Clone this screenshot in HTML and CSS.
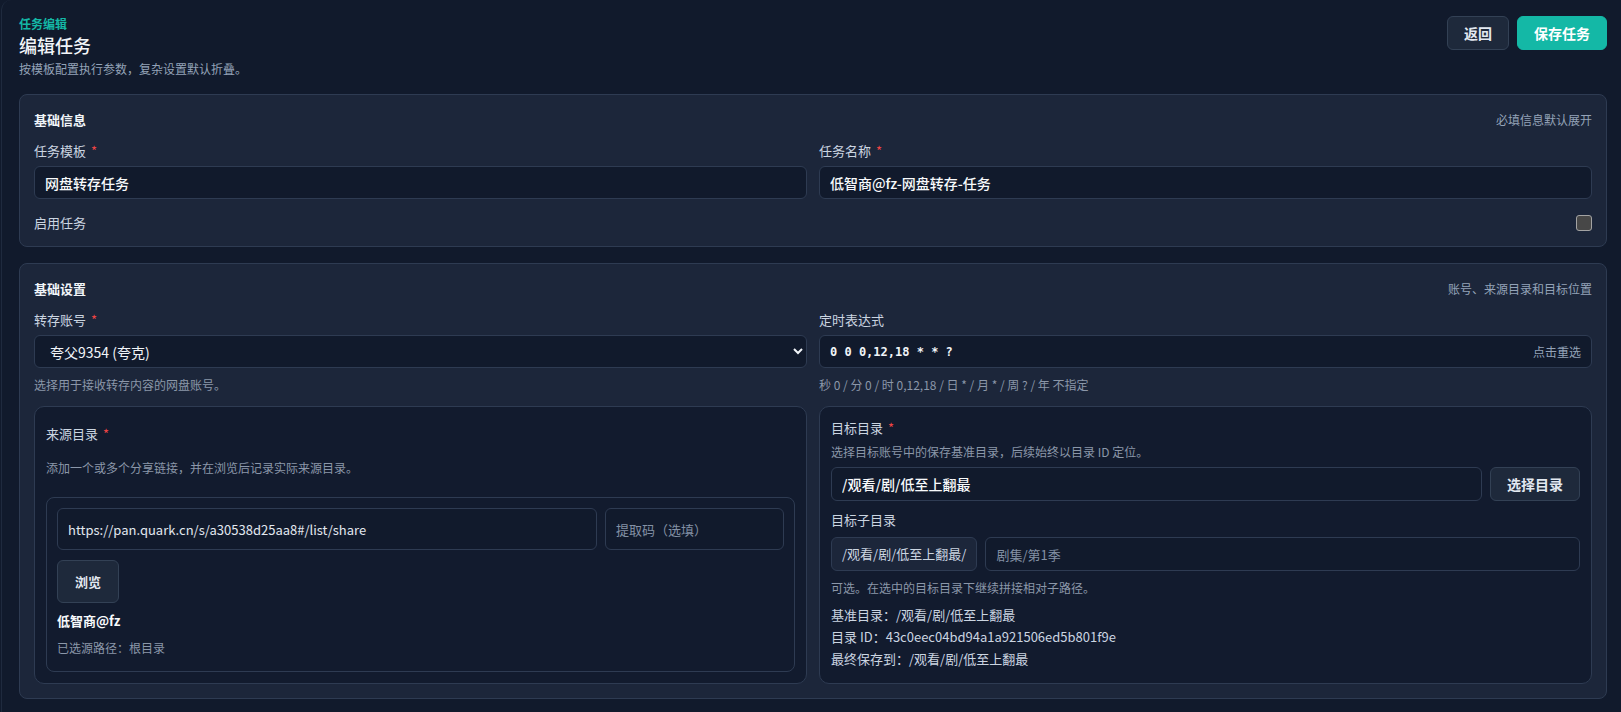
FILE: index.html
```html
<!DOCTYPE html>
<html lang="zh-CN">
<head>
  <meta charset="UTF-8">
  <title>编辑任务</title>
  <link rel="stylesheet" href="styles.css">
</head>
<body>
  <div class="page">
    <header class="page-head">
      <div>
        <div class="eyebrow">任务编辑</div>
        <h1>编辑任务</h1>
        <p class="sub">按模板配置执行参数，复杂设置默认折叠。</p>
      </div>
      <div class="actions">
        <button class="btn">返回</button>
        <button class="btn primary">保存任务</button>
      </div>
    </header>

    <section class="card">
      <div class="card-head">
        <h2>基础信息</h2>
        <span class="hint">必填信息默认展开</span>
      </div>
      <div class="grid">
        <div class="field">
          <span class="label">任务模板 <i class="req">*</i></span>
          <input class="input strong" type="text" value="网盘转存任务">
        </div>
        <div class="field">
          <span class="label">任务名称 <i class="req">*</i></span>
          <input class="input strong" type="text" value="低智商@fz-网盘转存-任务">
        </div>
      </div>
      <div class="toggle-row">
        <span class="label">启用任务</span>
        <input class="check" type="checkbox">
      </div>
    </section>

    <section class="card">
      <div class="card-head">
        <h2>基础设置</h2>
        <span class="hint">账号、来源目录和目标位置</span>
      </div>
      <div class="grid">
        <div class="field">
          <span class="label">转存账号 <i class="req">*</i></span>
          <select class="input select">
            <option>夸父9354 (夸克)</option>
          </select>
          <p class="help">选择用于接收转存内容的网盘账号。</p>
        </div>
        <div class="field">
          <span class="label">定时表达式</span>
          <div class="input cron">
            <code>0 0 0,12,18 * * ?</code>
            <span class="cron-pick">点击重选</span>
          </div>
          <p class="help">秒 0 / 分 0 / 时 0,12,18 / 日 * / 月 * / 周 ? / 年 不指定</p>
        </div>
      </div>

      <div class="grid boxes">
        <div class="box source">
          <span class="label">来源目录 <i class="req">*</i></span>
          <p class="help source-help">添加一个或多个分享链接，并在浏览后记录实际来源目录。</p>
          <div class="link-item">
            <div class="link-row">
              <input class="input tall url" type="text" value="https://pan.quark.cn/s/a30538d25aa8#/list/share">
              <input class="input tall code" type="text" placeholder="提取码（选填）">
            </div>
            <button class="btn browse">浏览</button>
            <div class="owner">低智商@fz</div>
            <p class="help">已选源路径：根目录</p>
          </div>
        </div>

        <div class="box target">
          <span class="label">目标目录 <i class="req">*</i></span>
          <p class="help tight">选择目标账号中的保存基准目录，后续始终以目录 ID 定位。</p>
          <div class="pick-row">
            <input class="input dir strong" type="text" value="/观看/剧/低至上翻最">
            <button class="btn pick">选择目录</button>
          </div>
          <span class="label sub-label">目标子目录</span>
          <div class="pick-row">
            <span class="prefix">/观看/剧/低至上翻最/</span>
            <input class="input dir" type="text" placeholder="剧集/第1季">
          </div>
          <p class="help">可选。在选中的目标目录下继续拼接相对子路径。</p>
          <div class="summary">
            <div>基准目录：/观看/剧/低至上翻最</div>
            <div>目录 ID：43c0eec04bd94a1a921506ed5b801f9e</div>
            <div>最终保存到：/观看/剧/低至上翻最</div>
          </div>
        </div>
      </div>
    </section>
  </div>
</body>
</html>
```

FILE: styles.css
```css
* {
  box-sizing: border-box;
}

body {
  margin: 0;
  background: #111a2c;
  color: #e2e8f0;
  font-family: "Noto Sans CJK SC", "Noto Sans", sans-serif;
  font-size: 13px;
  line-height: 18px;
}

.page {
  margin-left: 1px;
  padding: 16px 14px 14px 17px;
  border-left: 1px solid #1f2a3e;
  border-top-left-radius: 10px;
}

.page-head {
  display: flex;
  justify-content: space-between;
  align-items: flex-start;
  margin-bottom: 17px;
}

.eyebrow {
  color: #14b8a6;
  font-size: 12px;
  font-weight: 700;
  line-height: 16px;
}

h1 {
  margin: 1px 0 0;
  font-size: 18px;
  font-weight: 500;
  line-height: 24px;
  color: #f1f5f9;
}

.sub {
  margin: 4px 0 0;
  font-size: 12px;
  line-height: 16px;
  color: #94a3b8;
}

.actions {
  display: flex;
  gap: 8px;
}

.btn {
  height: 34px;
  padding: 0 16px;
  border: 1px solid #334155;
  border-radius: 6px;
  background: #1e293b;
  color: #e2e8f0;
  font-family: inherit;
  font-size: 14px;
  font-weight: 700;
  cursor: pointer;
}

.btn.primary {
  background: #14b8a6;
  border-color: #14b8a6;
  color: #ffffff;
}

.card {
  background: #1c263a;
  border: 1px solid #2e3b52;
  border-radius: 8px;
  padding: 15px 14px;
  margin-bottom: 16px;
}

.card + .card {
  padding-bottom: 14px;
}

.card-head {
  display: flex;
  justify-content: space-between;
  align-items: center;
  height: 20px;
  margin-bottom: 12px;
}

h2 {
  margin: 0;
  font-size: 13px;
  font-weight: 700;
  color: #f1f5f9;
}

.hint {
  font-size: 12px;
  color: #94a3b8;
}

.grid {
  display: grid;
  grid-template-columns: 1fr 1fr;
  gap: 12px;
}

.field {
  display: flex;
  flex-direction: column;
}

.label {
  display: block;
  color: #cbd5e1;
  font-size: 13px;
  line-height: 18px;
  margin-bottom: 6px;
}

.req {
  color: #ef4444;
  font-style: normal;
  margin-left: 2px;
}

.input {
  width: 100%;
  height: 33px;
  padding: 0 10px;
  background: #111a2c;
  border: 1px solid #2e3b52;
  border-radius: 6px;
  color: #e2e8f0;
  font-family: inherit;
  font-size: 13px;
  outline: none;
}

.input::placeholder {
  color: #8391a5;
}

.strong {
  font-size: 14px;
  font-weight: 500;
  color: #f8fafc;
}

.select {
  color-scheme: dark;
  padding: 0 11px;
  font-size: 14px;
  color: #f1f5f9;
}

.cron {
  display: flex;
  justify-content: space-between;
  align-items: center;
}

.cron code {
  font-family: "DejaVu Sans Mono", monospace;
  font-size: 12px;
  font-weight: 700;
  color: #f1f5f9;
}

.cron-pick {
  font-size: 12px;
  color: #94a3b8;
}

.help {
  margin: 8px 0 0;
  font-size: 12px;
  line-height: 18px;
  color: #8b97a9;
}

.toggle-row {
  display: flex;
  justify-content: space-between;
  align-items: center;
  margin-top: 16px;
  height: 16px;
}

.toggle-row .label {
  margin: 0;
}

.check {
  appearance: none;
  width: 16px;
  height: 16px;
  margin: 0;
  background: #474747;
  border: 1px solid #a3a3a3;
  border-radius: 3px;
}

.boxes {
  margin-top: 12px;
}

.box {
  background: #121b2e;
  border: 1px solid #2e3b52;
  border-radius: 10px;
  padding: 12px 11px 11px;
  display: flex;
  flex-direction: column;
}

.box.source {
  padding-top: 18px;
}

.box .label {
  margin: 0;
}

.source-help {
  margin-top: 16px;
}

.link-item {
  margin-top: 20px;
  border: 1px solid #2e3b52;
  border-radius: 8px;
  padding: 10px 10px 14px;
}

.link-row {
  display: flex;
  gap: 8px;
}

.tall {
  height: 42px;
}

.url {
  flex: 1;
}

.code {
  width: 179px;
  flex: none;
}

.browse {
  display: block;
  height: 43px;
  margin-top: 10px;
  padding: 0 17px;
  font-size: 13px;
}

.owner {
  margin-top: 9px;
  font-weight: 700;
  color: #f8fafc;
}

.owner + .help {
  margin-top: 9px;
}

.help.tight {
  margin-top: 6px;
}

.pick-row {
  display: flex;
  gap: 8px;
  margin-top: 6px;
}

.dir {
  flex: 1;
  height: 34px;
}

.pick {
  flex: none;
  width: 90px;
  padding: 0;
}

.box .sub-label {
  margin-top: 10px;
}

.sub-label + .pick-row {
  margin-top: 8px;
}

.prefix {
  flex: none;
  display: flex;
  align-items: center;
  height: 34px;
  padding: 0 10px;
  background: #1c263a;
  border: 1px solid #2e3b52;
  border-radius: 6px;
  color: #cbd5e1;
  font-size: 13px;
}

.pick-row + .help {
  margin-top: 8px;
}

.summary {
  margin-top: 7px;
  color: #cbd5e1;
  font-size: 13px;
  line-height: 22px;
}
```
